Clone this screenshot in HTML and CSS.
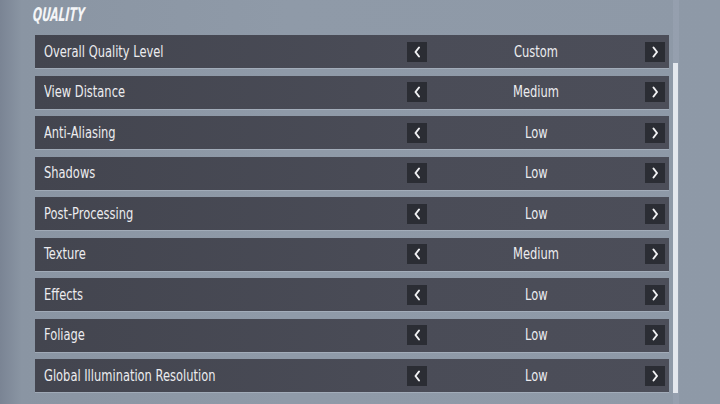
FILE: index.html
```html
<!DOCTYPE html>
<html lang="en">
<head>
  <meta charset="UTF-8" />
  <meta name="viewport" content="width=device-width, initial-scale=1.0"/>
  <title>Quality Settings</title>
  <link rel="stylesheet" href="styles.css">
</head>
<body>

<div class="screen">
  <div class="panel">
    <h2 class="section-title"><span>QUALITY</span></h2>

    <div class="settings">
      <div class="row">
        <span class="label">Overall Quality Level</span>
        <div class="picker">
          <span class="arrow"><svg viewBox="0 0 20 20"><path d="M12 5.5 L8.5 10 L12 14.5"/></svg></span>
          <span class="value"><span>Custom</span></span>
          <span class="arrow"><svg viewBox="0 0 20 20"><path d="M8.5 5.5 L12 10 L8.5 14.5"/></svg></span>
        </div>
      </div>
      <div class="row">
        <span class="label">View Distance</span>
        <div class="picker">
          <span class="arrow"><svg viewBox="0 0 20 20"><path d="M12 5.5 L8.5 10 L12 14.5"/></svg></span>
          <span class="value"><span>Medium</span></span>
          <span class="arrow"><svg viewBox="0 0 20 20"><path d="M8.5 5.5 L12 10 L8.5 14.5"/></svg></span>
        </div>
      </div>
      <div class="row">
        <span class="label">Anti-Aliasing</span>
        <div class="picker">
          <span class="arrow"><svg viewBox="0 0 20 20"><path d="M12 5.5 L8.5 10 L12 14.5"/></svg></span>
          <span class="value"><span>Low</span></span>
          <span class="arrow"><svg viewBox="0 0 20 20"><path d="M8.5 5.5 L12 10 L8.5 14.5"/></svg></span>
        </div>
      </div>
      <div class="row">
        <span class="label">Shadows</span>
        <div class="picker">
          <span class="arrow"><svg viewBox="0 0 20 20"><path d="M12 5.5 L8.5 10 L12 14.5"/></svg></span>
          <span class="value"><span>Low</span></span>
          <span class="arrow"><svg viewBox="0 0 20 20"><path d="M8.5 5.5 L12 10 L8.5 14.5"/></svg></span>
        </div>
      </div>
      <div class="row">
        <span class="label">Post-Processing</span>
        <div class="picker">
          <span class="arrow"><svg viewBox="0 0 20 20"><path d="M12 5.5 L8.5 10 L12 14.5"/></svg></span>
          <span class="value"><span>Low</span></span>
          <span class="arrow"><svg viewBox="0 0 20 20"><path d="M8.5 5.5 L12 10 L8.5 14.5"/></svg></span>
        </div>
      </div>
      <div class="row">
        <span class="label">Texture</span>
        <div class="picker">
          <span class="arrow"><svg viewBox="0 0 20 20"><path d="M12 5.5 L8.5 10 L12 14.5"/></svg></span>
          <span class="value"><span>Medium</span></span>
          <span class="arrow"><svg viewBox="0 0 20 20"><path d="M8.5 5.5 L12 10 L8.5 14.5"/></svg></span>
        </div>
      </div>
      <div class="row">
        <span class="label">Effects</span>
        <div class="picker">
          <span class="arrow"><svg viewBox="0 0 20 20"><path d="M12 5.5 L8.5 10 L12 14.5"/></svg></span>
          <span class="value"><span>Low</span></span>
          <span class="arrow"><svg viewBox="0 0 20 20"><path d="M8.5 5.5 L12 10 L8.5 14.5"/></svg></span>
        </div>
      </div>
      <div class="row">
        <span class="label">Foliage</span>
        <div class="picker">
          <span class="arrow"><svg viewBox="0 0 20 20"><path d="M12 5.5 L8.5 10 L12 14.5"/></svg></span>
          <span class="value"><span>Low</span></span>
          <span class="arrow"><svg viewBox="0 0 20 20"><path d="M8.5 5.5 L12 10 L8.5 14.5"/></svg></span>
        </div>
      </div>
      <div class="row">
        <span class="label">Global Illumination Resolution</span>
        <div class="picker">
          <span class="arrow"><svg viewBox="0 0 20 20"><path d="M12 5.5 L8.5 10 L12 14.5"/></svg></span>
          <span class="value"><span>Low</span></span>
          <span class="arrow"><svg viewBox="0 0 20 20"><path d="M8.5 5.5 L12 10 L8.5 14.5"/></svg></span>
        </div>
      </div>
    </div>
  </div>

  <div class="scroll-track">
    <div class="scroll-thumb"></div>
  </div>
</div>

</body>
</html>
```

FILE: styles.css
```css
body {
  margin: 0;
  height: 404px;
  overflow: hidden;
  font-family: "DejaVu Sans Condensed", "DejaVu Sans", sans-serif;
  background: linear-gradient(90deg, #7a8494 0%, #8a95a3 3%, #8f9aa8 40%, #8e99a7 100%);
  color: #ececef;
}

.screen {
  display: flex;
  padding-left: 35px;
}

.panel {
  width: 634px;
}

/* game font is very narrow, squeeze the condensed face a bit more */
.section-title {
  margin: 0 0 0 -2px;
  height: 35px;
  padding-top: 3px;
  box-sizing: border-box;
  font-size: 19px;
  font-weight: bold;
  font-style: italic;
  color: #f4f5f7;
}

.section-title span {
  display: inline-block;
  transform: scaleX(0.63) skewX(-6deg);
  transform-origin: left center;
}

.settings {
  display: flex;
  flex-direction: column;
  gap: 7.5px;
}

.row {
  display: flex;
  align-items: center;
  height: 33px;
  padding: 0 4px 0 9px;
  background: linear-gradient(90deg, #43454f 0%, #4a4c57 60%, #4c4e59 100%);
  box-shadow: 0 1px 0 rgba(200, 208, 220, 0.35);
}

.label {
  flex: 1;
  font-size: 15px;
  white-space: nowrap;
  transform: scaleX(0.85);
  transform-origin: left center;
}

.picker {
  display: flex;
  align-items: center;
  width: 258px;
}

.arrow {
  width: 20px;
  height: 20px;
  background: #2b2d34;
}

.arrow svg {
  display: block;
  width: 20px;
  height: 20px;
  fill: none;
  stroke: #f2f2f4;
  stroke-width: 2;
  stroke-linecap: round;
  stroke-linejoin: round;
}

.value {
  flex: 1;
  text-align: center;
  font-size: 15px;
}

.value span {
  display: inline-block;
  transform: scaleX(0.85);
}

.scroll-track {
  margin-left: 4px;
  width: 6px;
  height: 404px;
  padding-top: 63px;
  box-sizing: border-box;
  background: rgba(170, 180, 195, 0.25);
}

.scroll-thumb {
  width: 5px;
  height: 330px;
  background: #e4e8ee;
}
```
